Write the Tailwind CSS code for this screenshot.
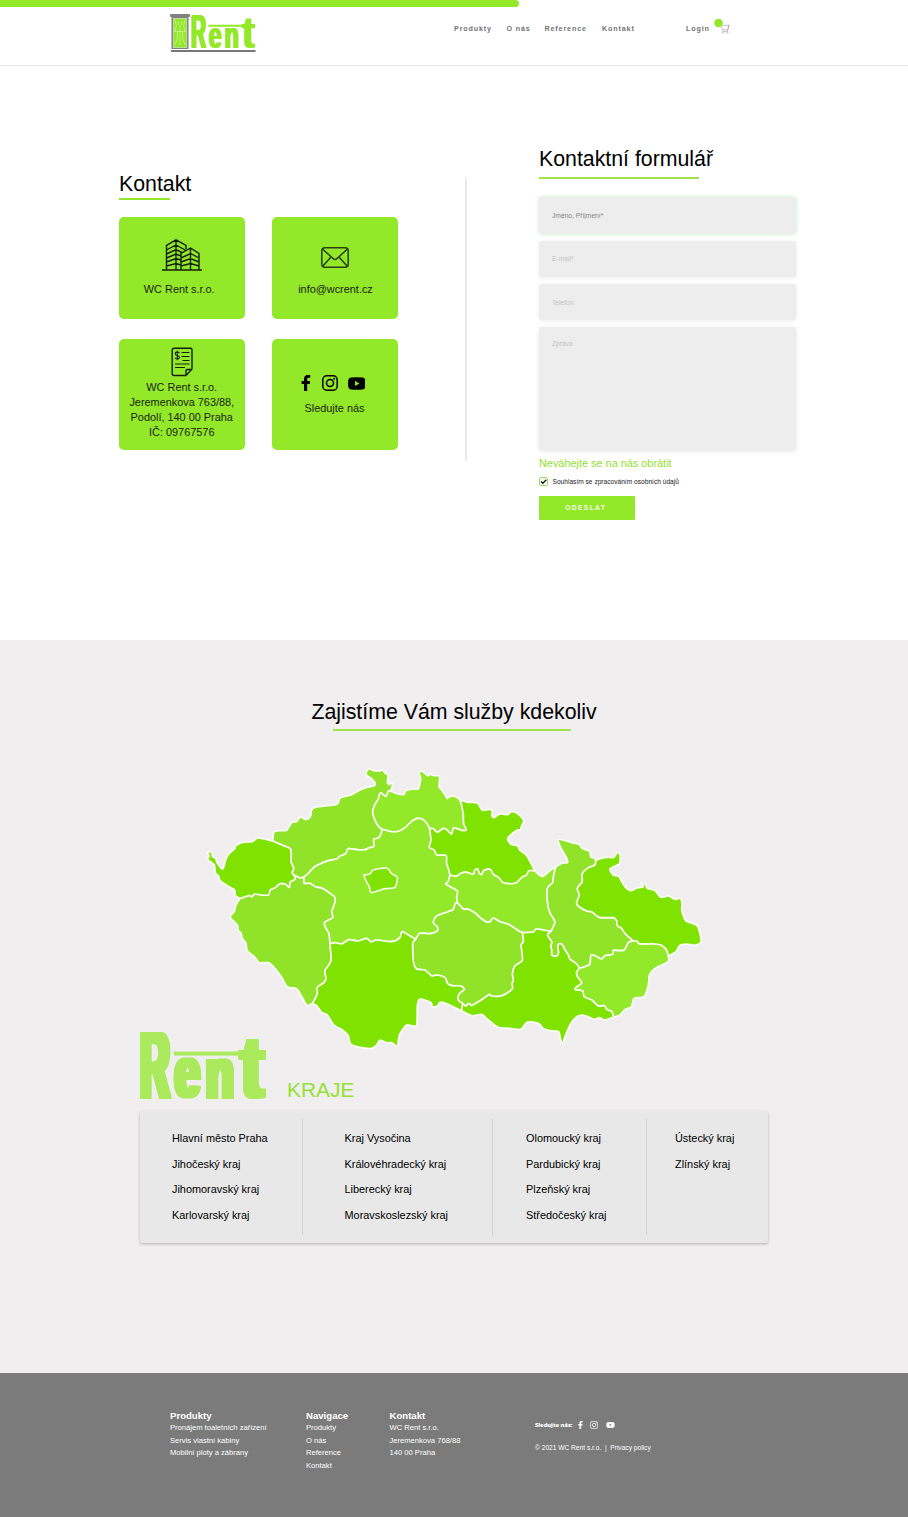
<!DOCTYPE html>
<html lang="cs">
<head>
<meta charset="utf-8">
<title>WC Rent – Kontakt</title>
<script src="https://cdn.jsdelivr.net/npm/@tailwindcss/browser@4"></script>
</head>
<body class="w-[908px] bg-white font-['Liberation_Sans',Arial,sans-serif] text-black">

<svg class="absolute h-0 w-0">
  <filter id="heavy" filterUnits="userSpaceOnUse" x="-10" y="-10" width="400" height="225"><feMorphology operator="dilate" radius="8 2"/></filter>
</svg>
<svg class="hidden">
  <symbol id="rent" viewBox="0 0 376 202" preserveAspectRatio="none">
    <g filter="url(#heavy)" font-family="'Liberation Sans', sans-serif" font-weight="700" fill="currentColor">
      <text x="0" y="199" font-size="286" textLength="88" lengthAdjust="spacingAndGlyphs">R</text>
      <text x="104" y="197" font-size="216" textLength="75" lengthAdjust="spacingAndGlyphs">e</text>
      <text x="196" y="199" font-size="219" textLength="84" lengthAdjust="spacingAndGlyphs">n</text>
      <text x="299" y="197" font-size="262" textLength="72" lengthAdjust="spacingAndGlyphs">t</text>
    </g>
    <rect x="101" y="59" width="275" height="12" fill="currentColor"/>
  </symbol>
  <symbol id="fb" viewBox="0 0 10 16"><path fill="currentColor" d="M3 16V9H.6V6H3V4C3 1.400 4.500 0 6.800 0H9.200V2.800H7.600C6.500 2.800 6.200 3.300 6.200 4.200V6H9.100L8.700 9H6.200V16Z"/></symbol>
  <symbol id="ig" viewBox="0 0 16 16"><g fill="none" stroke="currentColor" stroke-width="1.500"><rect x=".8" y=".8" width="14.400" height="14.400" rx="4"/><circle cx="8" cy="8" r="3.500"/></g><circle cx="12.200" cy="3.800" r="1" fill="currentColor"/></symbol>
  <symbol id="yt" viewBox="0 0 18 13"><path fill="currentColor" fill-rule="evenodd" d="M3 .4Q9-.2 15 .4Q17.400.6 17.700 3Q18.200 6.500 17.700 10Q17.400 12.400 15 12.600Q9 13.200 3 12.600Q.6 12.400.3 10Q-.2 6.500.3 3Q.6.6 3 .4ZM7.200 3.900V9.100L11.800 6.500Z"/></symbol>
</svg>

<header class="h-[66px] border-b border-[#e6e6e6]">
  <div class="h-[7px] w-[519px] rounded-r-full bg-[#94e82a]"></div>
  <div class="flex pl-[170px] pt-[7px]">
    <svg class="h-[39px] w-[86px] text-[#94e82a]" viewBox="0 0 86 39">
      <rect x="1.500" y="2" width="17" height="33" fill="#808080"/>
      <rect x="0" y="0" width="20" height="3" rx="1" fill="#808080"/>
      <rect x="3.300" y="4.500" width="13.400" height="29" fill="#94e82a" stroke="#d5e8c3" stroke-width=".7"/>
      <path d="M5 6Q8 12 5 17M15 6Q12 12 15 17M8.300 7.500V11M10 11V31M11.700 7.500V11M4 17.500H16M7.500 18Q8 26 5 31M12.500 18Q12 26 15 31" fill="none" stroke="#c9f593" stroke-width=".8"/>
      <rect x="1" y="36" width="84.500" height="2" fill="#777"/>
      <use href="#rent" x="21" y=".8" width="64.500" height="34"/>
    </svg>
    <nav class="ml-[198px] grid h-[31px] grid-cols-[52.500px_38px_57.500px_84px_auto] items-center text-[7.200px] font-bold tracking-[0.84px] text-[#747474]">
      <a>Produkty</a><a>O nás</a><a>Reference</a><a>Kontakt</a><a>Login</a>
    </nav>
    <svg class="ml-[3px] mt-[4px] h-[17px] w-[18px]" viewBox="0 0 18 17"><path d="M9 7.300H15.800L14.800 11.800H9.300L8.500 7.300M16.800 7H15.800L14.500 13.300H9.500" fill="none" stroke="#aaa" stroke-width=".7"/><circle cx="9.800" cy="14.500" r=".9" fill="none" stroke="#aaa" stroke-width=".6"/><circle cx="14.200" cy="14.500" r=".9" fill="none" stroke="#aaa" stroke-width=".6"/><circle cx="5.500" cy="5" r="4.300" fill="#94e82a"/></svg>
  </div>
</header>

<main>
<section class="flex h-[574px] pl-[119px]">
  <div class="w-[279px] pt-[105px]">
    <h1 class="h-[27px] text-[21.300px] leading-[27px]">Kontakt</h1>
    <div class="h-[2px] w-[51px] bg-[#94e82a]"></div>
    <div class="mt-[17px] grid grid-cols-[125.500px_126px] grid-rows-[102px_111px] gap-x-[27.500px] gap-y-[20px] text-center text-[10.900px] leading-[15px] text-[#17240a] [&>div]:rounded-[5px] [&>div]:bg-[#94e82a]">
      <div class="flex flex-col items-center pt-[21px]">
        <svg class="h-[34px] w-[40px]" viewBox="0 0 40 34" fill="none" stroke="#13210a" stroke-width="1.400"><path d="M0 32H40M4.500 32V7.500L14 1.800L24 7.500V11M14 1.800V32M19 32V15.500L28.500 10L37 15.500V32M28.500 10V32M4.500 12L14 7L24 12.500M4.500 16L14 11.500L20 14.500M4.500 20L14 16L19 18M4.500 24L14 20.500L19 22M4.500 28L14 25.500L19 27M19 20L28.500 15.500L37 20M19 24L28.500 20.500L37 24M19 28L28.500 25.500L37 28"/></svg>
        <p class="mt-[10px] pr-[5px]">WC Rent s.r.o.</p>
      </div>
      <div class="flex flex-col items-center pt-[30px]">
        <svg class="h-[21px] w-[28px]" viewBox="0 0 28 21" fill="none" stroke="#26400f" stroke-width="1.500"><rect x=".8" y=".8" width="26.400" height="19.400" rx="3"/><path d="M1.500 2L12 11.500Q14 13.500 16 11.500L26.500 2M1.500 19.500L10 10M26.500 19.500L18 10"/></svg>
        <p class="mt-[14px] pl-[1px]">info@wcrent.cz</p>
      </div>
      <div class="flex flex-col items-center pt-[8px]">
        <svg class="h-[30px] w-[22px]" viewBox="0 0 22 30" fill="none" stroke="#13210a"><path stroke-width="1.400" d="M3 1.200H19.500Q21 1.200 21 2.700V22L15 28.500H3Q1.200 28.500 1.200 26.700V3Q1.200 1.200 3 1.200ZM15 28V24Q15 22.500 16.500 22.500H21"/><path stroke-width="1" d="M10.500 5.500H18.500M10.500 9.500H18.500M11.500 13.500H18.500M4 17H18.500M4 20.500H14"/><path stroke-width="1.100" d="M8.500 6Q7.500 4.800 6 5Q4 5.200 4.300 7Q4.500 8.200 6.300 8.500Q8.500 9 8.500 10.400Q8.300 12 6.300 12Q4.700 12 4 10.800M6.300 3.700V13.300"/></svg>
        <p class="mt-[3px]">WC Rent s.r.o.<br>Jeremenkova 763/88,<br>Podolí, 140 00 Praha<br>IČ: 09767576</p>
      </div>
      <div class="pt-[36px]">
        <div class="flex items-center pl-[28.500px] text-black">
          <svg class="h-[16px] w-[10px]"><use href="#fb"/></svg>
          <svg class="ml-[11px] h-[16px] w-[16px]"><use href="#ig"/></svg>
          <svg class="ml-[10px] h-[13px] w-[17.500px]"><use href="#yt"/></svg>
        </div>
        <p class="mt-[10px] pr-[1px]">Sledujte nás</p>
      </div>
    </div>
  </div>
  <div class="ml-[67px] mt-[111px] h-[284px] w-[2px] bg-[#e9e9e9]"></div>
  <form class="ml-[72px] w-[257px] pt-[80px]">
    <h2 class="h-[31px] whitespace-nowrap text-[21.300px] leading-[27px]">Kontaktní formulář</h2>
    <div class="h-[2px] w-[160px] bg-[#a0e34f]"></div>
    <div class="mt-[18px] flex flex-col text-[6.700px] [&>*]:w-full [&>*]:rounded-[3px] [&>*]:bg-[#ededed] [&>*]:px-[13px]">
      <input class="h-[36.500px] shadow-[0_0_4px_#bff0bf] placeholder:text-[#858585]" placeholder="Jméno, Příjmení*">
      <input class="mt-[7.500px] h-[35.500px] shadow-[0_1px_4px_#00000014] placeholder:text-[#c4c4c4]" placeholder="E-mail*">
      <input class="mt-[7.500px] h-[36px] shadow-[0_1px_4px_#00000014] placeholder:text-[#c4c4c4]" placeholder="Telefon">
      <textarea class="mt-[7px] h-[123px] resize-none pt-[12px] shadow-[0_1px_4px_#0000001c] placeholder:text-[#c4c4c4]" placeholder="Zpráva"></textarea>
    </div>
    <p class="mt-[6px] text-[10.900px] leading-[14px] text-[#94e02f]">Neváhejte se na nás obrátit</p>
    <label class="mt-[7px] flex h-[9px] items-center whitespace-nowrap text-[6.620px] text-[#222]">
      <svg class="mr-[4.500px] h-[9px] w-[9px]" viewBox="0 0 9 9" fill="none"><rect x=".5" y=".5" width="8" height="8" rx="1.500" stroke="#94e05a"/><path d="M2 4.500L3.800 6.300L7.300 2.700" stroke="#111" stroke-width="1.300"/></svg>
      Souhlasím se zpracováním osobních údajů
    </label>
    <button type="button" class="mt-[9.500px] block h-[24.500px] w-[95.500px] rounded-[1px] bg-[#94e82a] pr-[2px] text-[6.700px] font-bold tracking-[1.350px] text-white/90">ODESLAT</button>
  </form>
</section>

<section class="h-[733px] bg-[#f0eeef] pt-[59px]">
  <h2 class="h-[30px] text-center text-[21.300px] leading-[27px]">Zajistíme Vám služby kdekoliv</h2>
  <div class="ml-[333px] h-[2px] w-[238px] bg-[#a0e34f]"></div>
  <svg id="map" class="ml-[200px] mt-[29px] h-[300px] w-[510px]" viewBox="0 0 1530 900" stroke="#fff" stroke-opacity=".9" stroke-width="5" stroke-linejoin="round"></svg>
  <div class="-mt-[29px] flex h-[69px] items-start pl-[140px]">
    <svg class="mt-[1px] h-[67px] w-[126px] text-[#aaea5b]"><use href="#rent" width="126" height="67"/></svg>
    <h3 class="ml-[21px] mt-[45px] text-[20.900px] leading-[27px] text-[#94e233]">KRAJE</h3>
  </div>
  <div class="ml-[140px] mt-[10.500px] flex h-[132.500px] w-[628px] rounded-[2px] bg-[#e8e8e8] py-[8px] text-[10.900px] leading-[25.600px] shadow-[0_1px_3px_#00000040] [&>ul]:pt-[7.500px] [&>ul+ul]:border-l [&>ul+ul]:border-[#d2d2d2]">
    <ul class="w-[162px] pl-[32px]"><li>Hlavní město Praha</li><li>Jihočeský kraj</li><li>Jihomoravský kraj</li><li>Karlovarský kraj</li></ul>
    <ul class="w-[190px] pl-[41.500px]"><li>Kraj Vysočina</li><li>Královéhradecký kraj</li><li>Liberecký kraj</li><li>Moravskoslezský kraj</li></ul>
    <ul class="w-[154px] pl-[33px]"><li>Olomoucký kraj</li><li>Pardubický kraj</li><li>Plzeňský kraj</li><li>Středočeský kraj</li></ul>
    <ul class="w-[122px] pl-[28px]"><li>Ústecký kraj</li><li>Zlínský kraj</li></ul>
  </div>
</section>
</main>

<footer class="flex h-[144px] bg-[#7b7b7b] pl-[170px] pt-[37px] text-[7.600px] leading-[12.400px] text-white [&_h4]:text-[9.600px] [&_h4]:font-bold">
  <div class="w-[136px]"><h4>Produkty</h4><p>Pronájem toaletních zařízení</p><p>Servis vlastní kabiny</p><p>Mobilní ploty a zábrany</p></div>
  <div class="w-[83.500px]"><h4>Navigace</h4><p>Produkty</p><p>O nás</p><p>Reference</p><p>Kontakt</p></div>
  <div class="w-[145.500px]"><h4>Kontakt</h4><p>WC Rent s.r.o.</p><p>Jeremenkova 768/88</p><p>140 00 Praha</p></div>
  <div class="pt-[9px] text-[6.620px]">
    <div class="flex items-center"><b class="w-[43px] font-['Open_Sans'] text-[5.700px] font-extrabold">Sledujte nás:</b>
      <svg class="h-[8px] w-[5px]"><use href="#fb"/></svg>
      <svg class="ml-[7px] h-[8px] w-[8px]"><use href="#ig"/></svg>
      <svg class="ml-[7.500px] h-[6px] w-[9px]"><use href="#yt"/></svg>
    </div>
    <p class="mt-[10.500px] whitespace-pre">© 2021 WC Rent s.r.o.  |  Privacy policy</p>
  </div>
</footer>

<script>
// Borders between neighbouring regions; each list runs from one junction to the next.
const S = {
 kvOut:"218,243 188,236 172,234 157,245 124,248 107,258 104,267 88,280 78,297 71,322 66,327 58,318 50,306 47,295 38,290 35,277 22,277 28,288 23,298 43,315 46,338 57,350 60,362 82,377 104,390 106,407 120,415",
 kvPl:"120,415 130,412 148,406 155,410 164,402 185,405 205,405 211,389 225,383 239,371 256,372 268,382 270,366 285,358 282,346",
 kvUl:"282,346 276,338 281,325 273,305 272,268 250,257 218,243",
 ulOut:"218,243 224,214 258,212 266,202 277,186 289,186 302,170 314,178 326,176 333,165 334,152 345,142 380,137 405,135 415,128 420,114 435,109 455,104 480,90 500,82 523,77 525,68 512,54 500,46 499,36 508,26 520,32 540,33 548,30 554,38 564,46 562,66 567,74 577,68 576,80 571,93",
 ulLb:"571,93 565,93 558,109 541,98 535,117 524,135 518,157 524,178 535,198 546,208",
 ulSt:"546,208 543,222 535,234 521,238 522,259 508,263 495,269 470,269 444,266 438,280 420,289 410,297 385,302 360,312 343,321 325,340 312,351",
 ulPl:"312,351 300,354 282,346",
 lbOut:"571,93 590,101 611,104 618,92 640,87 655,87 660,70 662,55 657,38 667,34 680,45 688,46 691,38 696,46 712,47 719,52 717,80 727,92 738,110 741,116 750,109 768,110 780,120",
 lbHk:"780,120 786,140 790,165 791,190 799,210 785,211 768,205 760,205 755,223 742,211 730,205 712,217 700,206 689,206",
 lbSt:"689,206 680,190 667,178 652,175 635,184 615,203 600,212 580,216 562,212 546,208",
 hkOut:"780,120 805,127 832,129 847,151 872,148 877,155 875,165 882,173 900,162 924,164 932,156 945,157 960,167 971,182 964,200 961,209 948,212 923,235 933,253 952,257 960,271 978,284 990,305 1005,333",
 hkPa:"1005,333 987,332 980,345 966,352 948,369 925,371 908,367 895,352 880,343 870,328 852,331 845,343 838,340 833,327 824,331 820,343 800,337 786,338 768,349 750,345",
 hkSt:"750,345 745,325 740,310 740,290 735,285 710,284 703,270 688,262 693,240 689,206",
 paOut:"1005,333 1020,347 1030,349 1045,336 1068,320",
 paOl:"1068,320 1061,345 1058,368 1042,386 1044,438 1052,462 1065,485 1058,505 1053,514",
 paJm:"1053,514 1030,510 1008,507 1000,516 967,518",
 paVy:"967,518 955,512 925,493 900,485 880,474 870,485 860,486 845,477 825,459 805,448 790,447 772,428",
 paSt:"772,428 770,410 773,393 760,385 738,372 745,364 750,345",
 olOut:"1068,320 1088,309 1103,308 1098,290 1082,262 1074,239 1095,242 1120,249 1138,254 1147,266 1168,273 1173,292 1183,293 1187,303",
 olMs:"1187,303 1185,315 1162,325 1146,343 1147,365 1132,385 1138,405 1130,428 1135,438 1160,453 1175,455 1198,472 1240,473 1250,482 1252,497 1265,505 1275,520 1300,543",
 olZl:"1300,543 1285,548 1273,570 1255,572 1240,571 1238,583 1215,587 1205,597 1188,589 1173,585 1170,612 1155,620 1138,625",
 olJm:"1138,625 1130,612 1110,598 1105,585 1095,570 1086,553 1076,552 1074,562 1076,580 1068,589 1055,585 1055,570 1052,558 1055,545 1042,525 1053,514",
 msOut:"1187,303 1198,297 1220,292 1240,293 1248,283 1254,278 1260,283 1259,310 1245,318 1229,328 1240,345 1257,350 1268,370 1280,386 1295,392 1310,385 1330,380 1323,370 1335,373 1342,385 1365,392 1382,412 1405,408 1425,418 1442,415 1446,435 1445,450 1457,482 1492,498 1503,545 1485,555 1460,552 1438,557 1428,575 1405,588",
 msZl:"1405,588 1398,568 1382,555 1360,552 1320,552 1310,543 1300,543",
 zlOut:"1405,588 1404,605 1365,625 1348,645 1345,675 1332,710 1302,715 1294,740 1275,748 1260,765 1241,771",
 zlJm:"1241,771 1235,755 1220,748 1213,737 1195,738 1175,720 1152,710 1148,693 1125,689 1130,680 1145,668 1132,650 1130,635 1138,625",
 jmOut:"1241,771 1215,780 1198,773 1182,778 1165,770 1148,765 1130,770 1110,795 1095,830 1088,850 1082,840 1076,815 1050,812 1030,805 1015,790 982,786 962,808 930,805 895,802 865,780 845,763 815,767 784,752",
 jmJc:"784,752 788,730",
 jmVy:"788,730 798,738 805,730 815,736 823,732 848,717 868,703 875,708 905,707 936,688 936,670 940,660 937,640 945,617 967,600 963,555 970,545 967,518",
 vyJc:"788,730 776,722 774,710 780,698 793,688 782,678 755,677 742,670 735,653 710,645 695,648 675,630 650,627 640,605 638,550 647,538",
 vySt:"647,538 660,520 690,521 713,512 712,500 700,488 710,468 745,455 760,448 765,432 772,428",
 jcOut:"784,752 760,740 735,729 720,727 712,738 697,740 693,727 660,717 652,735 649,797 620,795 598,825 592,858 575,848 560,848 540,840 530,855 515,865 480,862 452,852 445,828 430,812 402,795 382,765 365,757 350,737 338,730",
 jcPl:"338,730 352,702 352,682 372,668 378,655 375,632 393,602 390,552",
 jcSt:"390,552 405,548 425,552 447,539 475,543 500,535 513,546 530,540 575,545 600,533 606,515 625,525 647,538",
 plOut:"338,730 322,737 312,722 295,692 285,684 262,681 245,652 220,620 205,608 178,608 165,592 142,572 138,550 127,535 123,518 115,512 112,495 90,471 103,455 107,438 120,415",
 plSt:"390,552 386,520 375,500 374,487 398,472 395,455 405,425 403,410 390,400 372,388 360,383 345,380 330,370 312,370 312,351",
 prague:"491,345 510,342 520,330 560,324 575,341 592,352 585,382 555,386 514,398 508,380 497,360 491,345"
};
const light = "#94e82a", mid = "#91e32a", dark = "#80e200";
// Fill and borders of each region.
const regions = [
 [mid, "ulOut ulLb ulSt ulPl kvUl"],
 [light, "lbOut lbHk lbSt ulLb"],
 [light, "ulSt plSt jcSt vySt paSt hkSt lbSt"],
 [mid, "plOut kvPl ulPl plSt jcPl"],
 [dark, "kvOut kvPl kvUl"],
 [dark, "hkOut hkPa hkSt lbHk"],
 [light, "paOut paOl paJm paVy paSt hkPa"],
 [mid, "olOut olMs olZl olJm paOl"],
 [dark, "msOut msZl olMs"],
 [light, "zlOut zlJm olZl msZl"],
 [dark, "jmOut jmJc jmVy paJm olJm zlJm"],
 [mid, "vyJc vySt paVy jmVy"],
 [dark, "jcOut jcPl jcSt vyJc jmJc"],
 [dark, "prague"]
];
// Orders the borders so that each starts where the previous one ends; "-" walks one backwards.
function ring(list) {
  const ends = n => { const q = S[n].split(" "); return [q[0], q[q.length-1]]; };
  const rest = list.split(" "), out = [rest.shift()];
  let at = ends(out[0])[1];
  while (rest.length) {
    const i = rest.findIndex(n => ends(n).includes(at));
    if (i < 0) break;
    const n = rest.splice(i, 1)[0], e = ends(n), fwd = e[0] === at;
    out.push(fwd ? n : "-" + n);
    at = fwd ? e[1] : e[0];
  }
  return out;
}
// Catmull-Rom curve through the points of one border.
function curve(name) {
  const p = S[name.replace("-", "")].split(" ").map(q => q.split(",").map(Number));
  if (name[0] === "-") p.reverse();
  let d = "";
  for (let i = 0; i < p.length - 1; i++) {
    const a = p[i-1] || p[i], b = p[i], c = p[i+1], e = p[i+2] || c;
    d += `C${b[0]+(c[0]-a[0])/8} ${b[1]+(c[1]-a[1])/8} ${c[0]-(e[0]-b[0])/8} ${c[1]-(e[1]-b[1])/8} ${c[0]} ${c[1]}`;
  }
  return { start: p[0], d };
}
document.getElementById("map").innerHTML = regions.map(([fill, list]) => {
  const c = ring(list).map(curve);
  return `<path fill="${fill}" d="M${c[0].start.join(" ")}${c.map(x => x.d).join("")}Z"/>`;
}).join("");
</script>
</body>
</html>
